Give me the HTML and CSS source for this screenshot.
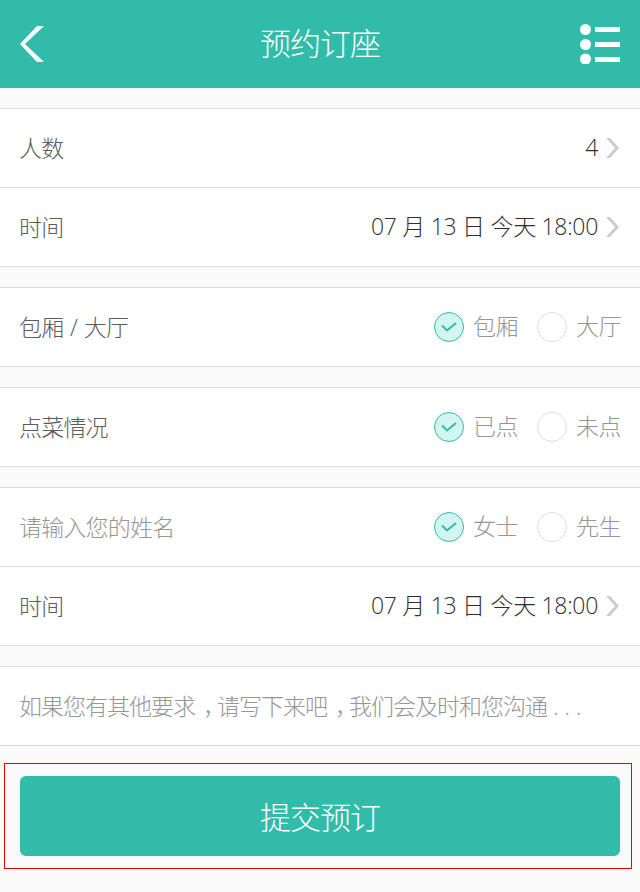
FILE: index.html
```html
<!DOCTYPE html>
<html lang="zh-CN">
<head>
    <meta charset="UTF-8">
    <meta name="viewport" content="width=device-width, initial-scale=1.0">
    <title>预约订座</title>
    <link rel="stylesheet" href="styles.css">
</head>
<body>
    <!-- 顶部导航 -->
    <header class="topbar">
        <svg class="back-icon" width="24" height="36" viewBox="0 0 24 36"><polygon points="17,0 24,0 5,18 24,36 17,36 0,18" fill="#fff"/></svg>
        <h1 class="topbar-title">预约订座</h1>
        <svg class="menu-icon" width="40" height="40" viewBox="0 0 40 40">
            <circle cx="5.5" cy="5.500" r="5.500" fill="#fff"/>
            <circle cx="5.5" cy="20.500" r="5.500" fill="#fff"/>
            <circle cx="5.5" cy="35" r="5.500" fill="#fff"/>
            <rect x="15" y="3" width="25" height="5" fill="#fff"/>
            <rect x="15" y="18" width="25" height="5" fill="#fff"/>
            <rect x="15" y="33" width="25" height="5" fill="#fff"/>
        </svg>
    </header>

    <section class="group">
        <div class="row">
            <span class="label">人数</span>
            <span class="value">4</span>
            <svg class="arrow" width="14" height="20" viewBox="0 0 14 20"><polygon points="0,0 4,0 13,10 4,20 0,20 9,10" fill="#ccc"/></svg>
        </div>
        <div class="row">
            <span class="label">时间</span>
            <span class="value">07 月 13 日 今天 18:00</span>
            <svg class="arrow" width="14" height="20" viewBox="0 0 14 20"><polygon points="0,0 4,0 13,10 4,20 0,20 9,10" fill="#ccc"/></svg>
        </div>
    </section>

    <section class="group">
        <div class="row">
            <span class="label">包厢 / 大厅</span>
            <div class="choices">
                <span class="radio checked"><svg width="16" height="10" viewBox="0 0 16 10"><path d="M1 3.500 L6 8.500 L15 1" fill="none" stroke="#30bca9" stroke-width="2"/></svg></span>
                <span class="choice-text">包厢</span>
                <span class="radio"></span>
                <span class="choice-text">大厅</span>
            </div>
        </div>
    </section>

    <section class="group">
        <div class="row">
            <span class="label">点菜情况</span>
            <div class="choices">
                <span class="radio checked"><svg width="16" height="10" viewBox="0 0 16 10"><path d="M1 3.500 L6 8.500 L15 1" fill="none" stroke="#30bca9" stroke-width="2"/></svg></span>
                <span class="choice-text">已点</span>
                <span class="radio"></span>
                <span class="choice-text">未点</span>
            </div>
        </div>
    </section>

    <section class="group">
        <div class="row">
            <span class="label placeholder">请输入您的姓名</span>
            <div class="choices">
                <span class="radio checked"><svg width="16" height="10" viewBox="0 0 16 10"><path d="M1 3.500 L6 8.500 L15 1" fill="none" stroke="#30bca9" stroke-width="2"/></svg></span>
                <span class="choice-text">女士</span>
                <span class="radio"></span>
                <span class="choice-text">先生</span>
            </div>
        </div>
        <div class="row">
            <span class="label">时间</span>
            <span class="value">07 月 13 日 今天 18:00</span>
            <svg class="arrow" width="14" height="20" viewBox="0 0 14 20"><polygon points="0,0 4,0 13,10 4,20 0,20 9,10" fill="#ccc"/></svg>
        </div>
    </section>

    <section class="group">
        <div class="row">
            <span class="label placeholder note">如果您有其他要求<span class="comma">，</span>请写下来吧<span class="comma">，</span>我们会及时和您沟通<span class="dots"> . . .</span></span>
        </div>
    </section>

    <div class="submit-box">
        <button class="submit-btn" type="button">提交预订</button>
    </div>
</body>
</html>
```

FILE: styles.css
```css
* {
    box-sizing: border-box;
}
body {
    margin: 0;
    height: 892px;
    overflow: hidden;
    background-color: #fafafa;
    font-family: "Open Sans", "Noto Sans CJK SC", sans-serif;
    font-weight: 300;
    font-size: 23px;
    line-height: 30px;
    color: #5c5c5c;
}
.topbar {
    height: 88px;
    background-color: #30bca9;
    display: grid;
    grid-template-columns: 1fr auto 1fr;
    align-items: center;
    padding: 0 20px;
}
.back-icon {
    display: block;
}
.topbar-title {
    margin: 0 0 2px;
    font-size: 31px;
    font-weight: 300;
    letter-spacing: -1px;
    line-height: 40px;
    color: #fff;
}
.menu-icon {
    display: block;
    justify-self: end;
}
.group {
    margin-top: 20px;
    background-color: #fff;
    border-top: 1px solid #ddd;
}
.row {
    height: 79px;
    border-bottom: 1px solid #ddd;
    display: flex;
    align-items: center;
    padding: 0 19px;
}
.label {
    flex: 1;
    white-space: nowrap;
    letter-spacing: -0.8px;
    word-spacing: 1.5px;
    margin-bottom: 1px;
}
.placeholder {
    color: #969696;
}
.note {
    letter-spacing: -1px;
}
.comma {
    padding-left: 8px;
    letter-spacing: -9px;
}
.dots {
    letter-spacing: 0;
    word-spacing: 0;
}
.value {
    color: #2e2e2e;
    letter-spacing: -0.3px;
    margin-bottom: 3px;
}
.arrow {
    display: block;
    margin-left: 8px;
    margin-right: 1px;
}
.choices {
    display: flex;
    align-items: center;
}
.radio {
    width: 30px;
    height: 30px;
    border: 1px solid #ddd;
    border-radius: 50%;
    display: flex;
    align-items: center;
    justify-content: center;
    margin-left: 19px;
}
.radio.checked {
    border-color: #30bca9;
    background-color: #d2f5f0;
}
.choice-text {
    margin-left: 9px;
    margin-bottom: 2px;
    letter-spacing: -0.5px;
    color: #969696;
}
.submit-box {
    margin: 17px 8px 0 4px;
    border: 1px solid #e60000;
    padding: 12px 11px 12px 15px;
}
.submit-btn {
    display: block;
    width: 100%;
    height: 80px;
    padding: 0 0 2px;
    border: none;
    border-radius: 6px;
    background-color: #30bca9;
    color: #fff;
    font-family: inherit;
    font-weight: 300;
    font-size: 31px;
    letter-spacing: -1px;
}
```
